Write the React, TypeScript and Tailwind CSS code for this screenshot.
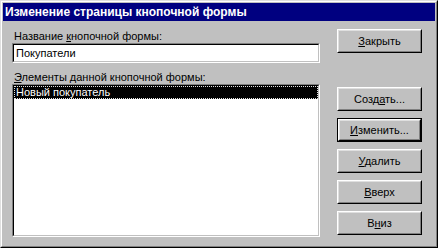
import type { ReactNode } from 'react';

const font = { fontFamily: '"Liberation Sans", Arial, sans-serif' };

// Win95-style raised push button
const Button = ({ children, isDefault, className = '' }: { children: ReactNode; isDefault?: boolean; className?: string }) => {
  const face = (
    <div className="w-full h-full border border-t-white border-l-white border-r-black border-b-black">
      <div className="w-full h-full border border-t-[#dfdfdf] border-l-[#dfdfdf] border-r-[#808080] border-b-[#808080] flex items-center justify-center text-[11px] leading-[13px] text-black">
        {children}
      </div>
    </div>
  );

  if (isDefault) {
    return <div className={`h-[24px] border border-black ${className}`}>{face}</div>;
  }
  return <div className={`h-[24px] ${className}`}>{face}</div>;
};

// sunken field border used by the text box and the list
const Sunken = ({ children, className = '' }: { children: ReactNode; className?: string }) => (
  <div className={`border border-t-[#808080] border-l-[#808080] border-r-white border-b-white ${className}`}>
    <div className="w-full h-full border border-t-black border-l-black border-r-[#c0c0c0] border-b-[#c0c0c0] bg-white">
      {children}
    </div>
  </div>
);

export default function App() {
  return (
    <div style={font} className="w-[438px] h-[248px] bg-[#c0c0c0] border border-t-[#dfdfdf] border-l-[#dfdfdf] border-r-black border-b-black select-none">
      <div className="h-full border border-t-white border-l-white border-r-[#808080] border-b-[#808080] p-px flex flex-col">
        {/* Title bar */}
        <div className="h-[18px] bg-[#000080] text-white font-bold text-[12px] leading-[18px] pl-[2px] whitespace-nowrap">
          Изменение страницы кнопочной формы
        </div>

        {/* Body */}
        <div className="flex-1 flex pt-[8px] pl-[9px] pr-[12px]">
          <div className="w-[308px] flex flex-col">
            <div className="mt-px h-[13px] text-[11px] leading-[13px] text-black pl-[2px] whitespace-nowrap">
              Название <u>к</u>нопочной формы:
            </div>
            <Sunken className="h-[20px]">
              <div className="pl-[2px] text-[11px] leading-[16px] text-black">Покупатели</div>
            </Sunken>
            <div className="mt-[8px] h-[13px] text-[11px] leading-[13px] text-black pl-[2px] whitespace-nowrap">
              <u>Э</u>лементы данной кнопочной формы:
            </div>
            <Sunken className="h-[153px]">
              <div className="h-[13px] bg-black border border-dotted border-[#e0e0e0] text-white text-[11px] leading-[11px] pl-[1px] whitespace-nowrap">
                Новый покупатель
              </div>
            </Sunken>
          </div>

          <div className="ml-[17px] w-[85px] flex flex-col">
            <Button className="h-[23px]">
              <span><u>З</u>акрыть</span>
            </Button>
            <div className="mt-[34px] flex flex-col gap-[7px]">
              <Button>
                <span>Созд<u>а</u>ть...</span>
              </Button>
              <Button isDefault>
                <span><u>И</u>зменить...</span>
              </Button>
              <Button>
                <span><u>У</u>далить</span>
              </Button>
              <Button>
                <span><u>В</u>верх</span>
              </Button>
              <Button>
                <span>В<u>н</u>из</span>
              </Button>
            </div>
          </div>
        </div>
      </div>
    </div>
  );
}
